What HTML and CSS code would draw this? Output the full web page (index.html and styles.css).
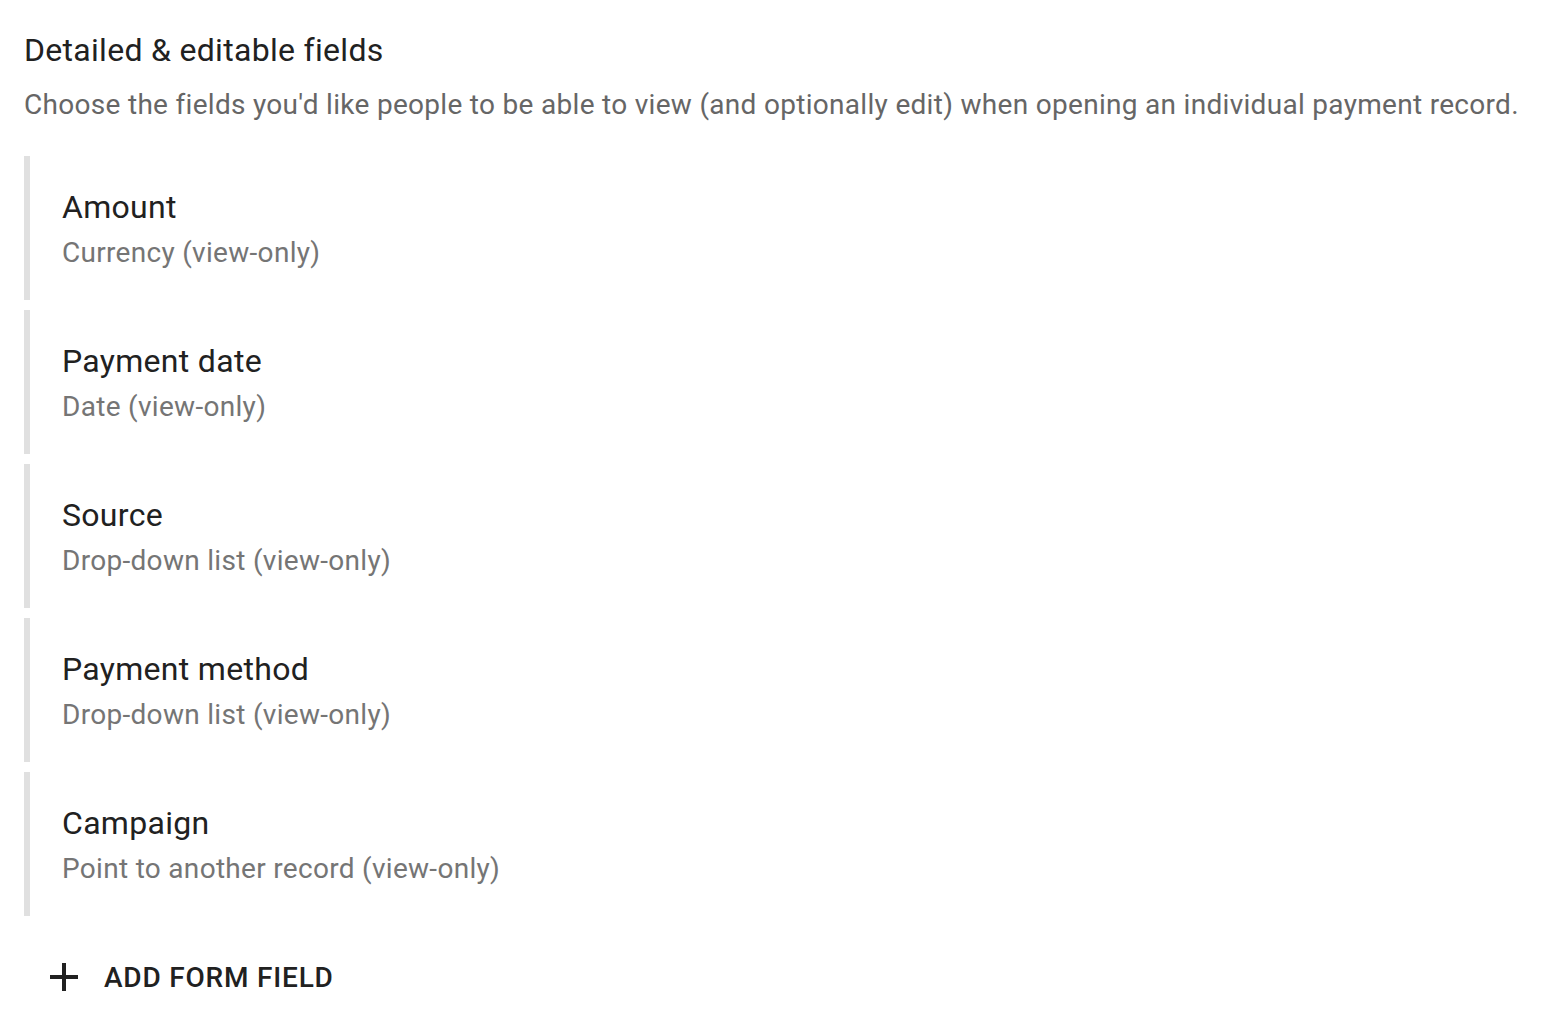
FILE: index.html
```html
<!DOCTYPE html>
<html>
<head>
<meta charset="utf-8">
<link rel="stylesheet" href="styles.css">
</head>
<body>
<div class="page">
  <h2 class="title">Detailed &amp; editable fields</h2>
  <p class="desc">Choose the fields you'd like people to be able to view (and optionally edit) when opening an individual payment record.</p>
  <div class="fields">
    <div class="field"><div class="name">Amount</div><div class="type">Currency (view-only)</div></div>
    <div class="field"><div class="name">Payment date</div><div class="type">Date (view-only)</div></div>
    <div class="field"><div class="name">Source</div><div class="type">Drop-down list (view-only)</div></div>
    <div class="field"><div class="name">Payment method</div><div class="type">Drop-down list (view-only)</div></div>
    <div class="field"><div class="name">Campaign</div><div class="type">Point to another record (view-only)</div></div>
  </div>
  <button class="add">
    <svg class="add-icon" width="28" height="30" viewBox="0 0 28 30"><path d="M14 0v28M0 14h28" stroke="#212121" stroke-width="4" fill="none"/></svg>
    <span>ADD FORM FIELD</span>
  </button>
</div>
</body>
</html>
```
FILE: styles.css
```css
html, body { margin: 0; padding: 0; background: #fff; }
body { font-family: Roboto, "Noto Sans", sans-serif; }
.page { padding: 30px 24px 0 24px; }
.title { margin: 0; font-size: 32px; font-weight: 400; color: #212121; line-height: 40px; letter-spacing: 0.3px; }
.desc { margin: 15px 0 0 0; font-size: 28px; color: #666666; line-height: 40px; letter-spacing: 0.3px; }
.fields { margin-top: 31px; display: flex; flex-direction: column; gap: 10px; }
.field { border-left: 6px solid #e0e0e0; height: 144px; box-sizing: border-box; padding: 33px 0 0 32px; }
.name { font-size: 32px; color: #212121; line-height: 36px; letter-spacing: 0.3px; }
.type { font-size: 28px; color: #757575; line-height: 32px; margin-top: 12px; letter-spacing: 0.3px; }
.add { display: flex; align-items: center; gap: 26px; background: none; border: 0; padding: 0; margin: 44px 0 0 26px; font-family: inherit; cursor: pointer; }
.add span { font-size: 28px; line-height: 36px; font-weight: 500; letter-spacing: 0.8px; color: #212121; }
```
